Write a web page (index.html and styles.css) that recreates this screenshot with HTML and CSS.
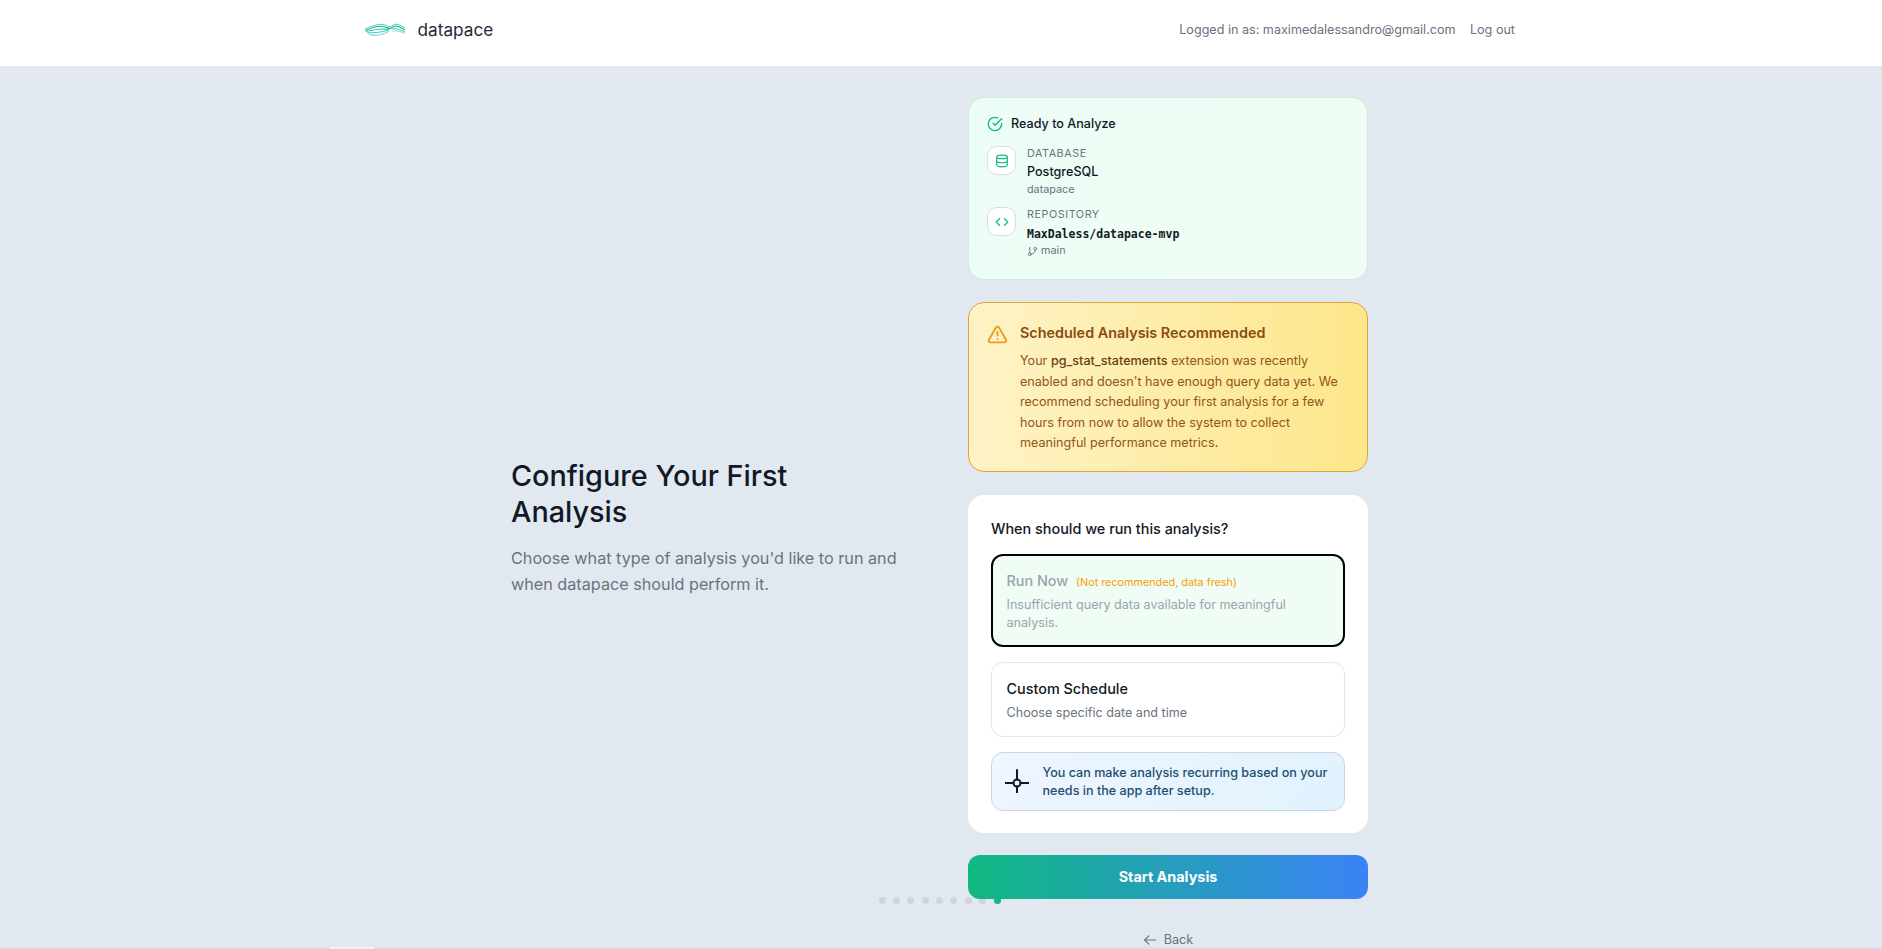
FILE: index.html
```html
<!DOCTYPE html>
<html lang="en">
<head>
<meta charset="utf-8">
<title>datapace</title>
<link rel="stylesheet" href="styles.css">
</head>
<body>
<header class="topbar">
  <div class="topbar-inner">
    <a class="brand">
      <svg class="brand-logo" viewBox="0 0 40 14" fill="none" stroke-linecap="round">
        <path d="M0 6C6 3.500 13 .5 18 1.500C21 2 23 3.500 25 4C27 3 29 1 31 1.200C35 1.500 37 3.500 40 5" stroke="#45d6b5" stroke-width="1"/>
        <path d="M.5 7.500C6 5 13 2.500 18 3.500C21 4 23 5.500 25 5.500C27 4.500 29 3 31 3C35 3.300 37 5.500 40 7" stroke="#14b393" stroke-width="1.100"/>
        <path d="M1.500 8.500C7 7.500 13 5.500 18 6C20 6.300 22 6.500 24 6.500" stroke="#2cc9a6" stroke-width="1.100"/>
        <path d="M2.500 9.800C8 10 15 9.500 23 7.500" stroke="#3fcfb4" stroke-width="1"/>
        <path d="M4 11C9 13.500 16 12.500 23.500 8.500" stroke="#78d8e8" stroke-width="1.200"/>
        <path d="M27 6C31 4.800 35 6.500 39.500 9" stroke="#2cc9a6" stroke-width="1"/>
        <path d="M28 8C32 7 36 8.500 39.500 10.500" stroke="#74dce0" stroke-width="1"/>
      </svg>
      <span class="brand-name">datapace</span>
    </a>
    <nav class="account">
      <span>Logged in as: maximedalessandro@gmail.com</span>
      <span>Log out</span>
    </nav>
  </div>
</header>
<main class="stage">
  <div class="dots">
    <i class="dot"></i><i class="dot"></i><i class="dot"></i><i class="dot"></i><i class="dot"></i><i class="dot"></i><i class="dot"></i><i class="dot"></i><i class="dot dot-on"></i>
  </div>
  <section class="intro">
    <h1>Configure Your First Analysis</h1>
    <p>Choose what type of analysis you'd like to run and when datapace should perform it.</p>
  </section>
  <section class="column">
    <div class="ready">
      <div class="ready-head">
        <svg class="ic-check" viewBox="0 0 24 24" fill="none" stroke="#10b981" stroke-width="2" stroke-linecap="round" stroke-linejoin="round"><path d="M22 11.080V12a10 10 0 1 1-5.930-9.140"/><path d="M22 4 12 14.010l-3-3"/></svg>
        <span>Ready to Analyze</span>
      </div>
      <div class="src">
        <div class="src-icon">
          <svg viewBox="0 0 24 24" fill="none" stroke="#10b981" stroke-width="2" stroke-linecap="round" stroke-linejoin="round"><ellipse cx="12" cy="5" rx="9" ry="3"/><path d="M3 5v14c0 1.660 4 3 9 3s9-1.340 9-3V5"/><path d="M3 12c0 1.660 4 3 9 3s9-1.340 9-3"/></svg>
        </div>
        <div class="src-text">
          <div class="src-label">DATABASE</div>
          <div class="src-name">PostgreSQL</div>
          <div class="src-sub">datapace</div>
        </div>
      </div>
      <div class="src">
        <div class="src-icon">
          <svg viewBox="0 0 24 24" fill="none" stroke="#10b981" stroke-width="2" stroke-linecap="round" stroke-linejoin="round"><path d="m16 18 6-6-6-6"/><path d="m8 6-6 6 6 6"/></svg>
        </div>
        <div class="src-text">
          <div class="src-label src-label-repo">REPOSITORY</div>
          <div class="src-mono">MaxDaless/datapace-mvp</div>
          <div class="src-sub src-branch">
            <svg viewBox="0 0 24 24" fill="none" stroke="#6b7280" stroke-width="2" stroke-linecap="round" stroke-linejoin="round"><path d="M6 3v12"/><circle cx="18" cy="6" r="3"/><circle cx="6" cy="18" r="3"/><path d="M18 9a9 9 0 0 1-9 9"/></svg>
            <span>main</span>
          </div>
        </div>
      </div>
    </div>
    <div class="warn">
      <svg class="warn-icon" viewBox="0 0 24 24" fill="none" stroke="#e8a020" stroke-width="2.200" stroke-linecap="round" stroke-linejoin="round"><path d="m21.730 18-8-14a2 2 0 0 0-3.480 0l-8 14A2 2 0 0 0 4 21h16a2 2 0 0 0 1.730-3Z"/><path d="M12 9v4"/><path d="M12 17h.01"/></svg>
      <div>
        <h3>Scheduled Analysis Recommended</h3>
        <p>Your <b>pg_stat_statements</b> extension was recently enabled and doesn't have enough query data yet. We recommend scheduling your first analysis for a few hours from now to allow the system to collect meaningful performance metrics.</p>
      </div>
    </div>
    <div class="when">
      <h2>When should we run this analysis?</h2>
      <div class="opt opt-now">
        <div class="opt-title">Run Now <small>(Not recommended, data fresh)</small></div>
        <div class="opt-desc">Insufficient query data available for meaningful analysis.</div>
      </div>
      <div class="opt">
        <div class="opt-title">Custom Schedule</div>
        <div class="opt-desc">Choose specific date and time</div>
      </div>
      <div class="info">
        <svg class="info-icon" viewBox="0 0 24 24" fill="none" stroke="#111827" stroke-width="2" stroke-linecap="round"><circle cx="12" cy="14" r="3.500"/><path d="M12 1v9.500M12 17.500V24M.5 14h8M15.500 14h8"/></svg>
        <span>You can make analysis recurring based on your needs in the app after setup.</span>
      </div>
    </div>
    <button class="start">Start Analysis</button>
    <a class="back">
      <svg viewBox="0 0 24 24" fill="none" stroke="#6b7280" stroke-width="2" stroke-linecap="round" stroke-linejoin="round"><path d="M22 12H3"/><path d="m10 19-7-7 7-7"/></svg>
      <span>Back</span>
    </a>
  </section>
  <div class="edge"><i class="edge-tab"></i></div>
</main>
</body>
</html>
```

FILE: styles.css
```css
* { box-sizing: border-box; }
html, body { margin: 0; height: 100%; overflow: hidden; }
body { font-family: Inter, "Liberation Sans", sans-serif; background: #e2e8f0; color: #111827; display: flex; flex-direction: column; }
svg { display: block; }

.topbar { height: 66px; background: #fff; flex: none; }
.topbar-inner { width: 1152px; margin: 0 auto; padding-right: 2px; height: 59px; display: flex; align-items: center; justify-content: space-between; }
.brand { display: flex; align-items: center; gap: 12.500px; }
.brand-logo { width: 40px; height: 14px; }
.brand-name { font-size: 17.200px; color: #1f2937; }
.account { display: flex; gap: 14.400px; font-size: 12.600px; color: #6b7280; }

.stage { position: relative; flex: 1; min-height: 0; overflow: hidden; display: grid; grid-template-columns: 400px 400px; column-gap: 57px; padding-left: 511px; align-items: start; }
.intro { padding-top: 392px; padding-right: 10px; }
.intro h1 { margin: 0 0 15px; font-size: 28.800px; line-height: 36px; font-weight: 500; color: #111827; }
.intro p { margin: 0; font-size: 16.200px; line-height: 26.300px; color: #6b7280; }

.column { padding-top: 31px; display: flex; flex-direction: column; }
.ready { height: 183px; border: 1px solid #c8f0dc; border-radius: 16px; padding: 16px 18px; background: linear-gradient(135deg, #ecfdf5, #f0fdf4); }
.ready-head { display: flex; align-items: center; gap: 8px; font-size: 12.600px; font-weight: 500; color: #111827; line-height: 20px; margin-bottom: 13px; }
.ic-check { width: 16px; height: 16px; }
.src { display: flex; gap: 11px; margin-bottom: 11px; }
.src-icon { width: 29px; height: 29px; margin-top: -1px; flex: none; display: flex; align-items: center; justify-content: center; background: #fff; border: 1px solid #d8dde3; border-radius: 10px; }
.src-icon svg { width: 14px; height: 14px; }
.src-label { font-size: 10.800px; line-height: 14px; color: #6b7280; letter-spacing: 0.540px; margin-bottom: 1px; }
.src-label-repo { margin-bottom: 3px; }
.src-name { font-size: 12.600px; line-height: 20px; font-weight: 500; color: #111827; margin-bottom: 1px; }
.src-mono { font-family: "DejaVu Sans Mono", monospace; font-size: 11.500px; font-weight: 700; line-height: 19px; color: #111827; }
.src-sub { font-size: 10.800px; line-height: 14px; color: #6b7280; }
.src-branch { display: flex; align-items: center; gap: 3px; }
.src-branch svg { width: 11px; height: 11px; }

.warn { margin-top: 22px; height: 170px; border: 1px solid #dfa535; border-radius: 16px; padding: 20px 19px; display: flex; gap: 11px; background: linear-gradient(90deg, #fef3c7, #fde68a); }
.warn-icon { width: 21px; height: 21px; margin-top: 1px; margin-left: -1px; margin-right: 1px; flex: none; }
.warn h3 { margin: 0 0 8px; font-size: 14.400px; line-height: 20px; font-weight: 600; color: #8a4b12; }
.warn p { margin: 0; font-size: 12.600px; line-height: 20.600px; color: #94541a; }
.warn b { font-weight: 500; color: #6b3d0e; }

.when { margin-top: 23px; height: 338px; background: #fff; border-radius: 16px; padding: 24px 23px; }
.when h2 { margin: 0 0 15px; font-size: 14.400px; line-height: 20px; font-weight: 500; color: #111827; }
.opt { border: 1px solid #e5e7eb; border-radius: 12px; padding: 15px 14.500px 14px; margin-bottom: 15px; }
.opt-now { height: 93px; border: 2px solid #000; background: #f0fdf4; padding: 14px 13.500px; }
.opt-title { font-size: 14.400px; line-height: 22px; font-weight: 500; color: #111827; }
.opt-desc { font-size: 12.600px; line-height: 18px; color: #6b7280; margin-top: 4px; }
.opt-now .opt-title, .opt-now .opt-desc { color: #9ca3af; }
.opt-now .opt-desc { margin-top: 2px; }
.opt-title small { margin-left: 4px; font-size: 10.800px; font-weight: 400; color: #f59e0b; }
.info { height: 59px; display: flex; align-items: center; gap: 13.500px; padding: 0 13px; border: 1px solid #cbd5e1; border-radius: 12px; background: linear-gradient(135deg, #eff6ff, #e0f2fe); font-size: 12.600px; line-height: 18px; font-weight: 500; color: #1e4e6e; }
.info-icon { width: 24px; height: 24px; margin-top: -2px; flex: none; }

.start { margin-top: 22px; height: 44px; width: 100%; flex: none; position: relative; border: 0; border-radius: 12px; padding: 0 0 2px; font: 700 14.400px Inter, "Liberation Sans", sans-serif; color: #fff; background: linear-gradient(90deg, #10b981, #3b82f6); }
.back { margin-top: 33px; display: flex; align-items: center; justify-content: center; gap: 7px; font-size: 12.600px; line-height: 16px; color: #6b7280; }
.back svg { width: 14px; height: 14px; }

.dots { position: absolute; left: 878.500px; top: 831px; display: flex; gap: 7.400px; }
.dot { width: 7px; height: 7px; border-radius: 50%; background: #cfd5de; }
.dot-on { background: #10b981; }

.edge { position: absolute; left: 0; right: 0; bottom: 0; height: 2px; background: #e4dde9; }
.edge-tab { position: absolute; left: 330px; top: 0; width: 44px; height: 2px; background: #f3f0f8; }
```
